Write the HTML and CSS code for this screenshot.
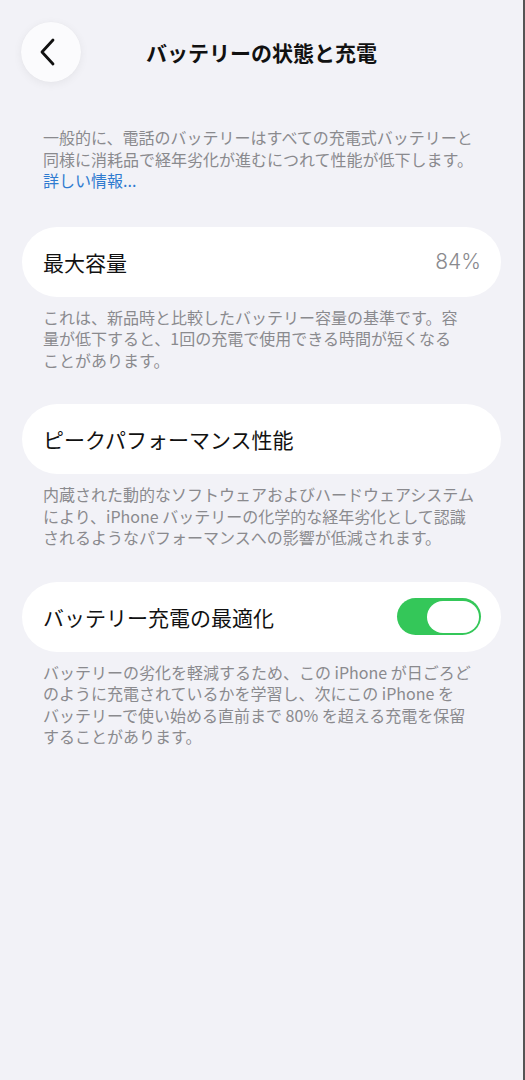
FILE: index.html
```html
<!DOCTYPE html>
<html lang="ja">
<head>
<meta charset="utf-8">
<title>バッテリーの状態と充電</title>
<link rel="stylesheet" href="styles.css">
</head>
<body>
<div class="screen">
  <header class="nav">
    <button class="back" aria-label="戻る">
      <svg width="20" height="30" viewBox="0 0 20 30"><path d="M14 3 L3 15 L14 27" fill="none" stroke="#111" stroke-width="2.8" stroke-linecap="round" stroke-linejoin="round"/></svg>
    </button>
    <h1 class="title">バッテリーの状態と充電</h1>
  </header>

  <p class="intro">一般的に、電話のバッテリーはすべての充電式バッテリーと<br>同様に消耗品で経年劣化が進むにつれて性能が低下します。<br><a class="link" href="#">詳しい情報...</a></p>

  <section class="group">
    <div class="card">
      <span class="label">最大容量</span>
      <span class="value">84%</span>
    </div>
    <p class="foot">これは、新品時と比較したバッテリー容量の基準です。容<br>量が低下すると、1回の充電で使用できる時間が短くなる<br>ことがあります。</p>
  </section>

  <section class="group">
    <div class="card">
      <span class="label">ピークパフォーマンス性能</span>
    </div>
    <p class="foot">内蔵された動的なソフトウェアおよびハードウェアシステム<br>により、iPhone バッテリーの化学的な経年劣化として認識<br>されるようなパフォーマンスへの影響が低減されます。</p>
  </section>

  <section class="group">
    <div class="card">
      <span class="label">バッテリー充電の最適化</span>
      <span class="toggle"><span class="knob"></span></span>
    </div>
    <p class="foot">バッテリーの劣化を軽減するため、この iPhone が日ごろど<br>のように充電されているかを学習し、次にこの iPhone を<br>バッテリーで使い始める直前まで 80% を超える充電を保留<br>することがあります。</p>
  </section>
</div>
</body>
</html>
```

FILE: styles.css
```css
html, body {
  margin: 0;
  padding: 0;
  background: #f2f2f7;
}
body {
  font-family: "Noto Sans CJK JP", "Noto Sans", sans-serif;
  color: #111;
}
.screen {
  min-height: 1080px;
  box-sizing: border-box;
  border-right: 2px solid #555;
  width: 525px;
  padding-top: 22px;
}
.nav {
  position: relative;
  height: 60px;
  display: flex;
  align-items: center;
  justify-content: center;
}
.back {
  position: absolute;
  left: 21px;
  top: 0;
  width: 60px;
  height: 60px;
  border-radius: 50%;
  border: none;
  background: #fbfbfd;
  box-shadow: 0 2px 10px rgba(0,0,0,0.06), 0 0 1px rgba(0,0,0,0.05);
  display: flex;
  align-items: center;
  justify-content: center;
  padding: 0 4px 0 0;
}
.title {
  margin: 0;
  font-size: 21px;
  font-weight: 700;
  color: #111;
}
.intro {
  margin: 45px 0 0;
  padding: 0 10px 0 43px;
  font-size: 16px;
  line-height: 21.5px;
  color: #8a8a8e;
}
.link {
  color: #2f7bd0;
  text-decoration: none;
}
.group {
  margin: 35px 22px 0;
}
.group + .group {
  margin-top: 33px;
}
.card {
  height: 70px;
  background: #fff;
  border-radius: 35px;
  display: flex;
  align-items: center;
  justify-content: space-between;
  padding: 0 20px 0 21px;
}
.label {
  font-size: 21px;
  color: #111;
}
.value {
  font-size: 21px;
  color: #8a8a8e;
  font-family: "Inter", "Noto Sans", sans-serif;
  font-weight: 300;
}
.toggle {
  width: 84px;
  height: 37px;
  border-radius: 19px;
  background: #34c759;
  display: flex;
  align-items: center;
  justify-content: flex-end;
  padding: 0 2.5px;
  box-sizing: border-box;
}
.knob {
  width: 52px;
  height: 32px;
  border-radius: 16px;
  background: #fff;
}
.foot {
  margin: 0;
  padding: 10px 0 0 21px;
  font-size: 16px;
  line-height: 21.5px;
  color: #8a8a8e;
}
```
